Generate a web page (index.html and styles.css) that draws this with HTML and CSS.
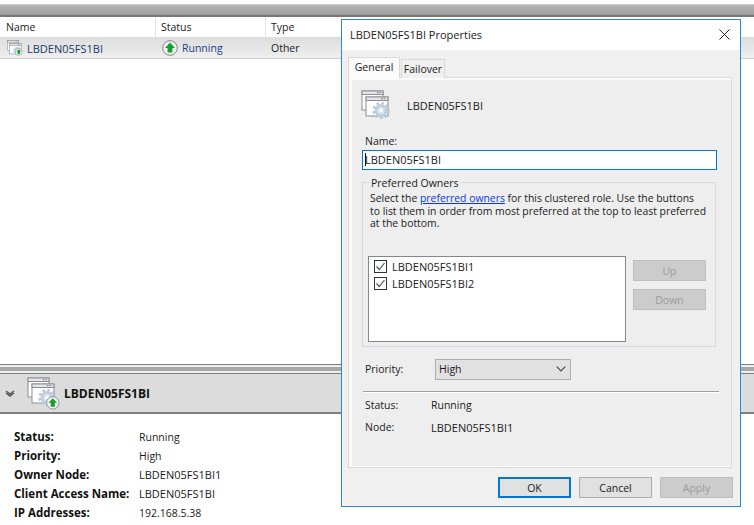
FILE: index.html
```html
<!DOCTYPE html>
<html lang="en">
<head>
<meta charset="utf-8">
<title>LBDEN05FS1BI Properties</title>
<link rel="stylesheet" href="styles.css">
</head>
<body>
<svg class="defs" width="0" height="0" aria-hidden="true">
  <defs>
    <g id="windows">
      <rect x="1" y="1" width="21" height="19" fill="#fff" stroke="#8b8d92"/>
      <rect x="1" y="1" width="21" height="3.5" fill="#e4e6ea" stroke="#8b8d92"/>
      <rect x="5" y="7" width="22" height="19" fill="#fff" stroke="#8b8d92"/>
      <rect x="5" y="7" width="22" height="3.5" fill="#e4e6ea" stroke="#8b8d92"/>
      <path d="M16 2.7h1.5M18.6 2.7h1.5M20 8.7h1.5M22.6 8.7h1.5" stroke="#6f7278" fill="none"/>
    </g>
    <g id="gear">
      <circle cx="20" cy="20.5" r="7.4" fill="none" stroke="#b7c6d6" stroke-width="2.4" stroke-dasharray="2.6 2.4"/>
      <circle cx="20" cy="20.5" r="5" fill="none" stroke="#bfcedd" stroke-width="3"/>
      <circle cx="20" cy="20.5" r="2.8" fill="#f6f8fa" stroke="#a9bacb" stroke-width=".6"/>
    </g>
    <g id="up">
      <circle cx="8" cy="8" r="7.3" fill="#f0f0f0" stroke="#858585"/>
      <path d="M8 2.6 13 8H10.4v4.6H5.6V8H3z" fill="#16a02c"/>
    </g>
  </defs>
</svg>
<div class="app">
  <div class="search"><span>Search</span></div>
  <div class="toolband"></div>
  <div class="thead">
    <div class="th th-name">Name</div>
    <div class="th th-status">Status</div>
    <div class="th th-type">Type</div>
  </div>
  <div class="trow">
    <div class="td td-name">
      <svg class="row-icon" width="16" height="16" viewBox="0 0 30 30"><use href="#windows"/><use href="#gear"/><g transform="translate(15 15) scale(.9)"><use href="#up"/></g></svg>
      <span class="caps">LBDEN05FS1BI</span>
    </div>
    <div class="td td-status">
      <svg class="status-icon" width="16" height="16" viewBox="0 0 16 16"><use href="#up"/></svg>
      <span>Running</span>
    </div>
    <div class="td td-type">Other</div>
  </div>
  <div class="listspace"></div>
  <div class="splitter"></div>
  <div class="summary">
    <svg class="chevrons" width="10" height="7" viewBox="0 0 10 7"><path d="M1 1 5 4 9 1M1 3 5 6 9 3" fill="none" stroke="#5a5a5a" stroke-width="1.5"/></svg>
    <svg class="summary-icon" width="33" height="33" viewBox="0 0 33 33"><use href="#windows"/><use href="#gear"/><g transform="translate(19 19) scale(.85)"><use href="#up"/></g></svg>
    <strong>LBDEN05FS1BI</strong>
  </div>
  <dl class="details">
    <div class="detail"><dt>Status:</dt><dd>Running</dd></div>
    <div class="detail"><dt>Priority:</dt><dd>High</dd></div>
    <div class="detail"><dt>Owner Node:</dt><dd class="caps">LBDEN05FS1BI1</dd></div>
    <div class="detail"><dt>Client Access Name:</dt><dd class="caps">LBDEN05FS1BI</dd></div>
    <div class="detail"><dt>IP Addresses:</dt><dd>192.168.5.38</dd></div>
  </dl>
</div>

<section class="dialog">
  <header class="titlebar">
    <span class="caps">LBDEN05FS1BI Properties</span>
    <svg class="close" width="11" height="11" viewBox="0 0 11 11"><path d="M.5.5l10 10M10.5.5l-10 10" stroke="#222" stroke-width="1" fill="none"/></svg>
  </header>
  <div class="dialog-body">
    <div class="tabs">
      <div class="tab tab-active">General</div>
      <div class="tab">Failover</div>
    </div>
    <div class="tabpanel">
      <div class="panel-inner">
        <div class="role">
          <svg class="role-icon" width="30" height="30" viewBox="0 0 30 30"><use href="#windows"/><use href="#gear"/></svg>
          <span class="caps">LBDEN05FS1BI</span>
        </div>
        <div class="name-label">Name:</div>
        <div class="name-input"><i class="caret"></i><span class="caps">LBDEN05FS1BI</span></div>
        <div class="group">
          <div class="legend">Preferred Owners</div>
          <p class="group-text">Select the <a href="#">preferred owners</a> for this clustered role. Use the buttons<br>to list them in order from most preferred at the top to least preferred<br>at the bottom.</p>
          <div class="owners">
            <ul class="owner-list">
              <li><span class="check"><svg width="11" height="11" viewBox="0 0 11 11"><path d="M1.5 5.5 4.3 8.5 9.5 2" fill="none" stroke="#555" stroke-width="1.2"/></svg></span><span class="caps">LBDEN05FS1BI1</span></li>
              <li><span class="check"><svg width="11" height="11" viewBox="0 0 11 11"><path d="M1.5 5.5 4.3 8.5 9.5 2" fill="none" stroke="#555" stroke-width="1.2"/></svg></span><span class="caps">LBDEN05FS1BI2</span></li>
            </ul>
            <div class="move-buttons">
              <div class="btn btn-disabled">Up</div>
              <div class="btn btn-disabled">Down</div>
            </div>
          </div>
        </div>
        <div class="priority">
          <span class="priority-label">Priority:</span>
          <div class="select"><span>High</span><svg width="10" height="6" viewBox="0 0 10 6"><path d="M.7.7 5 5 9.3.7" fill="none" stroke="#444" stroke-width="1.1"/></svg></div>
        </div>
        <div class="rule"></div>
        <div class="state-row"><span class="state-key">Status:</span><span>Running</span></div>
        <div class="state-row state-node"><span class="state-key">Node:</span><span class="caps">LBDEN05FS1BI1</span></div>
      </div>
    </div>
    <div class="actions">
      <div class="btn btn-primary">OK</div>
      <div class="btn">Cancel</div>
      <div class="btn btn-disabled">Apply</div>
    </div>
  </div>
</section>
</body>
</html>
```

FILE: styles.css
```css
* { box-sizing: border-box; }
html, body { margin: 0; height: 525px; overflow: hidden; background: #fff; }
body { font-family: "Open Sans", "Liberation Sans", sans-serif; font-size: 10.5px; color: #1a1a1a; position: relative; }
.defs { position: absolute; }
.caps { font-size: 11px; }

.app { display: flex; flex-direction: column; height: 525px; }
.search { height: 5px; overflow: hidden; display: flex; align-items: flex-end; padding-left: 6px; background: #fff; border-bottom: 1px solid #ccc; color: #666; font-style: italic; }
.search span { line-height: 14px; margin-bottom: 1px; flex: none; }
.toolband { height: 12px; background: linear-gradient(#b5b5b5, #9c9c9c); border-bottom: 2px solid #777; }
.thead { display: flex; height: 21px; background: #fff; border-bottom: 1px solid #dcdcdc; }
.th { display: flex; align-items: center; padding-left: 5px; border-right: 1px solid #e3e3e3; }
.th-name { width: 156px; padding-left: 6px; }
.th-status { width: 110px; }
.th-type { flex: 1; border-right: 0; }
.trow { display: flex; align-items: center; height: 21px; background: linear-gradient(#dedede, #efefef); border-bottom: 1px solid #cfcfcf; }
.td { display: flex; align-items: center; }
.td-name { width: 156px; padding-left: 7px; gap: 4px; color: #1c3766; }
.td-status { width: 110px; padding-left: 6px; gap: 4px; color: #1c3f80; }
.td-type { padding-left: 5px; }
.listspace { flex: 1; }
.splitter { height: 10px; flex: none; border-top: 1px solid #7f7f7f; border-bottom: 1px solid #7f7f7f; background: linear-gradient(#f0f0f0 0 2px, #a8a8a8 2px 6px, #f0f0f0 6px); }
.summary { display: flex; align-items: center; height: 40px; background: #dcdcdc; border-bottom: 2px solid #7f7f7f; padding-left: 5px; flex: none; }
.chevrons { flex: none; }
.summary-icon { margin-left: 12px; flex: none; }
.summary strong { margin-left: 4px; font-size: 12px; color: #111; }
.details { margin: 13px 0 0 14px; flex: none; height: 98px; }
.detail { display: flex; height: 19px; align-items: center; }
.details dt { width: 125px; font-weight: 700; font-size: 11.5px; color: #111; white-space: nowrap; }
.details dd { margin: 0; }

.dialog { position: absolute; left: 341px; top: 19px; width: 400px; height: 488px; border: 1px solid #2a88d6; background: #f0f0f0; display: flex; flex-direction: column; }
.titlebar { height: 30px; background: #fff; display: flex; align-items: center; justify-content: space-between; padding: 0 10px 2px 8px; flex: none; }
.close { flex: none; }
.dialog-body { padding: 7px 8px 0 6px; }
.tabs { display: flex; height: 21px; align-items: flex-end; position: relative; z-index: 1; }
.tab { height: 19px; width: 44px; margin-left: 1px; display: flex; align-items: center; justify-content: center; border: 1px solid #d9d9d9; border-bottom: 0; background: #f0f0f0; }
.tab-active { height: 21px; width: 52px; margin-left: 0; background: #fbfbfb; padding-bottom: 2px; }
.tabpanel { height: 391px; margin-top: -1px; border: 1px solid #d9d9d9; background: #fbfbfb; padding: 2px 0 1px 3px; }
.panel-inner { height: 100%; background: #eee; padding: 10px 0 0 10px; }
.role { display: flex; align-items: center; height: 30px; gap: 16px; padding-top: 1px; }
.role-icon { flex: none; margin-left: -1px; margin-top: -1px; }
.name-label { height: 16px; line-height: 16px; margin: 13px 0 0 3px; }
.name-input { height: 20px; width: 355px; margin-top: 1px; border: 1px solid #0078d7; background: #fff; display: flex; align-items: center; padding: 0 0 1px 2px; }
.caret { width: 1px; height: 13px; background: #111; margin-right: -1px; flex: none; }
.group { height: 165px; width: 354px; margin-top: 12px; border: 1px solid #d9d9d9; padding-left: 5px; }
.legend { width: fit-content; height: 14px; line-height: 14px; margin: -7px 0 0 2px; padding: 0 1px; background: #eee; }
.group-text { margin: 2px 0 0 2px; font-size: 10.4px; white-space: nowrap; line-height: 12.5px; height: 38px; }
.group-text a { color: #0b36e6; text-decoration: underline; }
.owners { display: flex; gap: 7px; margin-top: 26px; }
.owner-list { list-style: none; margin: 0; padding: 1px 0 0 5px; width: 258px; height: 86px; background: #fff; border: 1px solid #828790; }
.owner-list li { display: flex; align-items: center; height: 17px; gap: 5px; }
.check { width: 13px; height: 13px; border: 1px solid #333; background: #fff; display: flex; align-items: center; justify-content: center; }
.move-buttons { display: flex; flex-direction: column; gap: 8px; margin-top: 4px; }
.btn { width: 73px; height: 21px; display: flex; align-items: center; justify-content: center; border: 1px solid #adadad; background: #e1e1e1; }
.btn-disabled { background: #ccc; border-color: #bfbfbf; color: #9b9b9b; }
.btn-primary { border: 2px solid #0078d7; }
.priority { display: flex; align-items: center; height: 21px; margin: 12px 0 0 3px; }
.priority-label { width: 70px; padding-bottom: 1px; }
.select { width: 136px; height: 21px; border: 1px solid #adadad; background: #e1e1e1; display: flex; align-items: center; justify-content: space-between; padding: 0 4px 1px 3px; }
.rule { width: 356px; height: 2px; margin: 11px 0 0 1px; border-top: 1px solid #a0a0a0; border-bottom: 1px solid #fff; }
.state-row { display: flex; height: 16px; align-items: center; margin: 4px 0 0 3px; }
.state-node { margin-top: 6px; }
.state-key { width: 66px; }
.actions { display: flex; justify-content: flex-end; gap: 8px; margin-top: 9px; margin-right: -1px; }
```
